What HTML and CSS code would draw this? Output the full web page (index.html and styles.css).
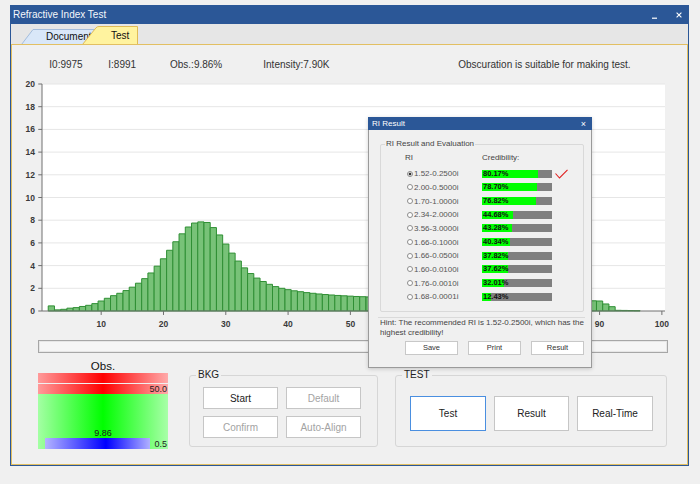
FILE: index.html
```html
<!DOCTYPE html>
<html>
<head>
<meta charset="utf-8">
<title>Refractive Index Test</title>
<link rel="stylesheet" href="styles.css">
</head>
<body>
<div class="window">
  <div class="titlebar">
    <span class="title">Refractive Index Test</span>
    <div class="title-ctrls">
      <svg class="ctl-min" width="5" height="5" viewBox="0 0 5 5"><rect x="0" y="3.6" width="5" height="1.2" fill="#fff"/></svg>
      <svg class="ctl-close" width="6" height="6" viewBox="0 0 6 6"><path d="M0.6 0.6L5.4 5.4M5.4 0.6L0.6 5.4" stroke="#fff" stroke-width="1.1"/></svg>
    </div>
  </div>
  <div class="tabstrip">
    <svg class="tabs" width="677" height="20" viewBox="0 0 677 20">
      <polygon points="10.5,20.5 22,5.5 90,5.5 90,20.5" fill="#d9e7f8" stroke="#a3bcdc"/>
      <text class="tab-text" x="35" y="15.5">Document</text>
      <path d="M71.5,20.5 L85,3.8 Q86.2,2.5 88,2.5 L126.5,2.5 L126.5,20.5" fill="#fff39f" stroke="#e0bb55"/>
      <text class="tab-text" x="100" y="14.7">Test</text>
    </svg>
  </div>
  <div class="content">
    <div class="info">
      <span>I0:9975</span>
      <span>I:8991</span>
      <span>Obs.:9.86%</span>
      <span>Intensity:7.90K</span>
      <span>Obscuration is suitable for making test.</span>
    </div>

    <svg class="chart" width="640" height="250" viewBox="0 0 640 250">
      <rect x="12" y="4" width="623" height="227" fill="#fff"/>
      <g transform="translate(12,231) scale(6.23,-11.35)">
        <g class="grid">
          <line x1="0" x2="100" y1="2" y2="2"/>
          <line x1="0" x2="100" y1="4" y2="4"/>
          <line x1="0" x2="100" y1="6" y2="6"/>
          <line x1="0" x2="100" y1="8" y2="8"/>
          <line x1="0" x2="100" y1="10" y2="10"/>
          <line x1="0" x2="100" y1="12" y2="12"/>
          <line x1="0" x2="100" y1="14" y2="14"/>
          <line x1="0" x2="100" y1="16" y2="16"/>
          <line x1="0" x2="100" y1="18" y2="18"/>
          <line x1="0" x2="100" y1="20" y2="20"/>
        </g>
        <g class="bars">
          <rect x="1" y="0" width="1" height="0.45"/>
          <rect x="2" y="0" width="1" height="0.1"/>
          <rect x="3" y="0" width="1" height="0.15"/>
          <rect x="4" y="0" width="1" height="0.25"/>
          <rect x="5" y="0" width="1" height="0.3"/>
          <rect x="6" y="0" width="1" height="0.4"/>
          <rect x="7" y="0" width="1" height="0.5"/>
          <rect x="8" y="0" width="1" height="0.65"/>
          <rect x="9" y="0" width="1" height="0.88"/>
          <rect x="10" y="0" width="1" height="1.12"/>
          <rect x="11" y="0" width="1" height="1.35"/>
          <rect x="12" y="0" width="1" height="1.56"/>
          <rect x="13" y="0" width="1" height="1.8"/>
          <rect x="14" y="0" width="1" height="2.1"/>
          <rect x="15" y="0" width="1" height="2.45"/>
          <rect x="16" y="0" width="1" height="2.85"/>
          <rect x="17" y="0" width="1" height="3.35"/>
          <rect x="18" y="0" width="1" height="3.95"/>
          <rect x="19" y="0" width="1" height="4.6"/>
          <rect x="20" y="0" width="1" height="5.35"/>
          <rect x="21" y="0" width="1" height="6.1"/>
          <rect x="22" y="0" width="1" height="6.8"/>
          <rect x="23" y="0" width="1" height="7.4"/>
          <rect x="24" y="0" width="1" height="7.75"/>
          <rect x="25" y="0" width="1" height="7.85"/>
          <rect x="26" y="0" width="1" height="7.8"/>
          <rect x="27" y="0" width="1" height="7.35"/>
          <rect x="28" y="0" width="1" height="6.7"/>
          <rect x="29" y="0" width="1" height="5.9"/>
          <rect x="30" y="0" width="1" height="5.1"/>
          <rect x="31" y="0" width="1" height="4.4"/>
          <rect x="32" y="0" width="1" height="3.8"/>
          <rect x="33" y="0" width="1" height="3.3"/>
          <rect x="34" y="0" width="1" height="2.9"/>
          <rect x="35" y="0" width="1" height="2.6"/>
          <rect x="36" y="0" width="1" height="2.35"/>
          <rect x="37" y="0" width="1" height="2.15"/>
          <rect x="38" y="0" width="1" height="2.0"/>
          <rect x="39" y="0" width="1" height="1.88"/>
          <rect x="40" y="0" width="1" height="1.78"/>
          <rect x="41" y="0" width="1" height="1.7"/>
          <rect x="42" y="0" width="1" height="1.62"/>
          <rect x="43" y="0" width="1" height="1.56"/>
          <rect x="44" y="0" width="1" height="1.5"/>
          <rect x="45" y="0" width="1" height="1.45"/>
          <rect x="46" y="0" width="1" height="1.41"/>
          <rect x="47" y="0" width="1" height="1.37"/>
          <rect x="48" y="0" width="1" height="1.34"/>
          <rect x="49" y="0" width="1" height="1.31"/>
          <rect x="50" y="0" width="1" height="1.28"/>
          <rect x="51" y="0" width="1" height="1.26"/>
          <rect x="52" y="0" width="1" height="1.24"/>
          <rect x="53" y="0" width="1" height="1.22"/>
          <rect x="54" y="0" width="1" height="1.2"/>
          <rect x="55" y="0" width="1" height="1.18"/>
          <rect x="56" y="0" width="1" height="1.16"/>
          <rect x="57" y="0" width="1" height="1.15"/>
          <rect x="58" y="0" width="1" height="1.14"/>
          <rect x="59" y="0" width="1" height="1.13"/>
          <rect x="60" y="0" width="1" height="1.12"/>
          <rect x="61" y="0" width="1" height="1.11"/>
          <rect x="62" y="0" width="1" height="1.1"/>
          <rect x="63" y="0" width="1" height="1.09"/>
          <rect x="64" y="0" width="1" height="1.08"/>
          <rect x="65" y="0" width="1" height="1.07"/>
          <rect x="66" y="0" width="1" height="1.06"/>
          <rect x="67" y="0" width="1" height="1.05"/>
          <rect x="68" y="0" width="1" height="1.04"/>
          <rect x="69" y="0" width="1" height="1.03"/>
          <rect x="70" y="0" width="1" height="1.02"/>
          <rect x="71" y="0" width="1" height="1.01"/>
          <rect x="72" y="0" width="1" height="1.0"/>
          <rect x="73" y="0" width="1" height="0.99"/>
          <rect x="74" y="0" width="1" height="0.98"/>
          <rect x="75" y="0" width="1" height="0.97"/>
          <rect x="76" y="0" width="1" height="0.96"/>
          <rect x="77" y="0" width="1" height="0.95"/>
          <rect x="78" y="0" width="1" height="0.94"/>
          <rect x="79" y="0" width="1" height="0.93"/>
          <rect x="80" y="0" width="1" height="0.92"/>
          <rect x="81" y="0" width="1" height="0.92"/>
          <rect x="82" y="0" width="1" height="0.91"/>
          <rect x="83" y="0" width="1" height="0.91"/>
          <rect x="84" y="0" width="1" height="0.9"/>
          <rect x="85" y="0" width="1" height="0.9"/>
          <rect x="86" y="0" width="1" height="0.9"/>
          <rect x="87" y="0" width="1" height="0.9"/>
          <rect x="88" y="0" width="1" height="0.9"/>
          <rect x="89" y="0" width="1" height="0.88"/>
          <rect x="90" y="0" width="1" height="0.62"/>
          <rect x="91" y="0" width="1" height="0.38"/>
          <rect x="92" y="0" width="1" height="0.06"/>
          <rect x="93" y="0" width="1" height="0.05"/>
          <rect x="94" y="0" width="1" height="0.04"/>
          <rect x="95" y="0" width="1" height="0.03"/>
        </g>
        <g class="axis">
          <line x1="0" y1="0" x2="0" y2="20"/>
          <line x1="0" y1="0" x2="100" y2="0"/>
          <line x1="-0.6" x2="0" y1="0" y2="0"/>
          <line x1="-0.6" x2="0" y1="2" y2="2"/>
          <line x1="-0.6" x2="0" y1="4" y2="4"/>
          <line x1="-0.6" x2="0" y1="6" y2="6"/>
          <line x1="-0.6" x2="0" y1="8" y2="8"/>
          <line x1="-0.6" x2="0" y1="10" y2="10"/>
          <line x1="-0.6" x2="0" y1="12" y2="12"/>
          <line x1="-0.6" x2="0" y1="14" y2="14"/>
          <line x1="-0.6" x2="0" y1="16" y2="16"/>
          <line x1="-0.6" x2="0" y1="18" y2="18"/>
          <line x1="-0.6" x2="0" y1="20" y2="20"/>
          <line x1="9.5" x2="9.5" y1="0" y2="-0.35"/>
          <line x1="19.5" x2="19.5" y1="0" y2="-0.35"/>
          <line x1="29.5" x2="29.5" y1="0" y2="-0.35"/>
          <line x1="39.5" x2="39.5" y1="0" y2="-0.35"/>
          <line x1="49.5" x2="49.5" y1="0" y2="-0.35"/>
          <line x1="59.5" x2="59.5" y1="0" y2="-0.35"/>
          <line x1="69.5" x2="69.5" y1="0" y2="-0.35"/>
          <line x1="79.5" x2="79.5" y1="0" y2="-0.35"/>
          <line x1="89.5" x2="89.5" y1="0" y2="-0.35"/>
          <line x1="99.5" x2="99.5" y1="0" y2="-0.35"/>
        </g>
      </g>
      <g class="ylab">
        <text x="5" y="234">0</text>
        <text x="5" y="211.3">2</text>
        <text x="5" y="188.6">4</text>
        <text x="5" y="165.9">6</text>
        <text x="5" y="143.2">8</text>
        <text x="5" y="120.5">10</text>
        <text x="5" y="97.8">12</text>
        <text x="5" y="75.1">14</text>
        <text x="5" y="52.4">16</text>
        <text x="5" y="29.7">18</text>
        <text x="5" y="7">20</text>
      </g>
      <g class="xlab">
        <text x="71.2" y="247">10</text>
        <text x="133.5" y="247">20</text>
        <text x="195.8" y="247">30</text>
        <text x="258.1" y="247">40</text>
        <text x="320.4" y="247">50</text>
        <text x="569.6" y="247">90</text>
        <text x="631.9" y="247">100</text>
      </g>
    </svg>

    <div class="progress"></div>

    <div class="bottom">
      <div class="obs">
        <div class="obs-title">Obs.</div>
        <div class="obs-box">
          <div class="red"></div>
          <div class="red red2"><span>50.0</span></div>
          <div class="green">
            <div class="obs-val">9.86</div>
            <div class="obs-row"><div class="blue"></div><span class="min">0.5</span></div>
          </div>
        </div>
      </div>

      <div class="group bkg">
        <div class="group-label">BKG</div>
        <div class="bkg-grid">
          <button class="btn">Start</button>
          <button class="btn dis">Default</button>
          <button class="btn dis">Confirm</button>
          <button class="btn dis">Auto-Align</button>
        </div>
      </div>

      <div class="group test">
        <div class="group-label">TEST</div>
        <div class="test-row">
          <button class="btn big focus">Test</button>
          <button class="btn big mid">Result</button>
          <button class="btn big">Real-Time</button>
        </div>
      </div>
    </div>
  </div>

  <div class="dialog">
    <div class="dlg-title"><span>RI Result</span><span class="dlg-x">×</span></div>
    <div class="dgroup">
      <div class="dgroup-label">RI Result and Evaluation</div>
      <div class="ri-head"><span class="h-ri">RI</span><span>Credibility:</span></div>
      <div class="ri-rows">
        <div class="ri-row"><span class="radio on"></span><span class="ri-val">1.52-0.2500i</span><div class="cbar" style="--p:80.17%"><span>80.17%</span></div>
          <svg class="check" width="13" height="10" viewBox="0 0 13 10"><polyline points="0.5,4.5 4.5,9 12.5,0.8" fill="none" stroke="#e02020" stroke-width="1.1"/></svg></div>
        <div class="ri-row"><span class="radio"></span><span class="ri-val">2.00-0.5000i</span><div class="cbar" style="--p:78.70%"><span>78.70%</span></div></div>
        <div class="ri-row"><span class="radio"></span><span class="ri-val">1.70-1.0000i</span><div class="cbar" style="--p:76.82%"><span>76.82%</span></div></div>
        <div class="ri-row"><span class="radio"></span><span class="ri-val">2.34-2.0000i</span><div class="cbar" style="--p:44.68%"><span>44.68%</span></div></div>
        <div class="ri-row"><span class="radio"></span><span class="ri-val">3.56-3.0000i</span><div class="cbar" style="--p:43.28%"><span>43.28%</span></div></div>
        <div class="ri-row"><span class="radio"></span><span class="ri-val">1.66-0.1000i</span><div class="cbar" style="--p:40.34%"><span>40.34%</span></div></div>
        <div class="ri-row"><span class="radio"></span><span class="ri-val">1.66-0.0500i</span><div class="cbar" style="--p:37.82%"><span>37.82%</span></div></div>
        <div class="ri-row"><span class="radio"></span><span class="ri-val">1.60-0.0100i</span><div class="cbar" style="--p:37.62%"><span>37.62%</span></div></div>
        <div class="ri-row"><span class="radio"></span><span class="ri-val">1.76-0.0010i</span><div class="cbar" style="--p:32.01%"><span>32.01%</span></div></div>
        <div class="ri-row"><span class="radio"></span><span class="ri-val">1.68-0.0001i</span><div class="cbar" style="--p:12.43%"><span>12.43%</span></div></div>
      </div>
    </div>
    <div class="hint">Hint: The recommended RI is 1.52-0.2500i, which has the highest credibility!</div>
    <div class="dlg-btns">
      <button class="dbtn">Save</button>
      <button class="dbtn">Print</button>
      <button class="dbtn">Result</button>
    </div>
  </div>
</div>
</body>
</html>
```

FILE: styles.css
```css
* { box-sizing: border-box; }
html, body { margin: 0; padding: 0; }
body {
  width: 700px;
  height: 484px;
  overflow: hidden;
  background: #f0f0f0;
  font-family: "Liberation Sans", Arial, sans-serif;
  font-size: 10px;
  color: #333;
}

.window {
  position: relative;
  margin: 5px 0 0 10px;
  width: 679px;
  height: 461px;
  border: 1px solid #2b5797;
  border-top: 0;
  background: #f0f0f0;
  display: flex;
  flex-direction: column;
}

.titlebar {
  height: 19px;
  flex: none;
  margin: 0 -1px;
  background: #2b5797;
  color: #fff;
  display: flex;
  align-items: center;
  justify-content: space-between;
  padding: 0 7px 0 3px;
}
.title { font-size: 10px; color: #f4f7fb; }
.title-ctrls { display: flex; align-items: center; gap: 19px; }
.ctl-min { display: block; margin-top: 4px; }
.ctl-close { display: block; }

.tabstrip {
  height: 20px;
  flex: none;
  background: #e6e6e6;
}
.tabs { display: block; }
.tab-text { font-family: "Liberation Sans", Arial, sans-serif; font-size: 10px; fill: #111; }

.content {
  flex: 1;
  border: 1px solid #e2bf62;
  padding: 0 19px 0 26px;
  display: flex;
  flex-direction: column;
}

.info {
  height: 35px;
  padding: 3px 0 0 11.3px;
  display: grid;
  grid-template-columns: 59px 61.7px 93.3px 195px auto;
  align-items: center;
  font-size: 10px;
  color: #333;
  white-space: nowrap;
}

.chart {
  display: block;
  margin-left: -8px;
  flex: none;
  overflow: visible;
}
.grid line { stroke: #e6e6e6; stroke-width: 1; vector-effect: non-scaling-stroke; }
.bars rect { fill: #78c278; stroke: #2f8f34; stroke-width: 1; vector-effect: non-scaling-stroke; }
.axis line { stroke: #707070; stroke-width: 1; vector-effect: non-scaling-stroke; }
.ylab text, .xlab text {
  font-family: "Liberation Sans", Arial, sans-serif;
  font-size: 8.5px;
  font-weight: bold;
  fill: #3a3a3a;
}
.ylab { text-anchor: end; }
.xlab { text-anchor: middle; }

.progress {
  flex: none;
  margin-top: 10px;
  height: 13px;
  border: 1px solid #a6a6a6;
  background: #f5f5f5;
  box-shadow: inset 0 0 0 1px #e6e6e6;
}

.bottom {
  display: flex;
  align-items: flex-start;
  margin-top: 7px;
}

.obs { width: 130px; flex: none; }
.obs-title {
  height: 13px;
  line-height: 13px;
  text-align: center;
  font-size: 11.5px;
  color: #111;
}
.obs-box {
  height: 76px;
  display: flex;
  flex-direction: column;
}
.red {
  height: 10px;
  flex: none;
  background: linear-gradient(to right, #ff9a9a, #ff0000 50%, #ffaaaa);
}
.red2 {
  margin-top: 1px;
  display: flex;
  justify-content: flex-end;
  align-items: center;
  font-size: 9px;
  line-height: 10px;
  color: #222;
  padding-right: 1px;
}
.green {
  flex: 1;
  background: linear-gradient(to right, #a4ffa4, #00ff00 50%, #a8ffa8);
  display: flex;
  flex-direction: column;
  justify-content: flex-end;
}
.obs-val {
  text-align: center;
  font-size: 9px;
  line-height: 10px;
  color: #1a1a1a;
}
.obs-row {
  height: 11px;
  display: flex;
  align-items: center;
}
.blue {
  margin-left: 7px;
  width: 105px;
  height: 11px;
  background: linear-gradient(to right, #b4b4ff, #0000ff 58%, #b0b0ff);
}
.min {
  margin-left: auto;
  padding-right: 1px;
  font-size: 9px;
  color: #222;
}

.group {
  flex: none;
  margin-top: 15px;
  height: 72px;
  border: 1px solid #d6d6d6;
  border-radius: 3px;
}
.bkg { margin-left: 21px; width: 189px; }
.test { margin-left: 17px; width: 272px; }
.group-label {
  width: max-content;
  margin: -7px 0 0 6px;
  padding: 0 2px;
  line-height: 12px;
  background: #f0f0f0;
  font-size: 10px;
  color: #222;
}

.btn {
  font-family: "Liberation Sans", Arial, sans-serif;
  font-size: 10px;
  color: #222;
  background: #fff;
  border: 1px solid #c6c6c6;
  padding: 0;
  margin: 0;
}
.btn.dis { color: #a3a3a3; }
.btn.focus { border-color: #4a8fe0; }

.bkg-grid {
  display: grid;
  grid-template-columns: 75px 75px;
  grid-auto-rows: 22px;
  column-gap: 8px;
  row-gap: 7px;
  margin: 6px 0 0 13px;
}
.test-row {
  display: flex;
  gap: 8px;
  margin: 15px 0 0 14px;
}
.btn.big { width: 76px; height: 35px; }
.btn.big.mid { width: 75px; }

/* dialog */
.dialog {
  position: absolute;
  left: 357px;
  top: 112px;
  width: 224px;
  height: 251px;
  background: #f0f0f0;
  border: 1px solid #9a9a9a;
  border-top: 0;
  box-shadow: 0 1px 4px rgba(0, 0, 0, 0.18);
  display: flex;
  flex-direction: column;
}
.dlg-title {
  height: 13px;
  flex: none;
  margin: 0 -1px;
  background: #2b5797;
  color: #fff;
  font-size: 8px;
  display: flex;
  align-items: center;
  justify-content: space-between;
  padding: 0 6px 0 4px;
}
.dlg-x { font-size: 9px; }

.dgroup {
  margin: 14px 0 0 11px;
  width: 204px;
  border: 1px solid #d9d9d9;
  border-radius: 2px;
  padding-bottom: 7px;
}
.dgroup-label {
  width: max-content;
  margin: -6px 0 0 4px;
  padding: 0 1px;
  line-height: 10px;
  background: #f0f0f0;
  font-size: 8px;
  color: #444;
}
.ri-head {
  display: flex;
  margin-top: 4px;
  height: 10px;
  line-height: 10px;
  padding-left: 24px;
  font-size: 8px;
  color: #444;
}
.h-ri { width: 77px; }
.ri-rows { margin-top: 4px; }
.ri-row {
  height: 13.67px;
  display: flex;
  align-items: center;
  padding-left: 26px;
  font-size: 8px;
  color: #555;
}
.radio {
  width: 6px;
  height: 6px;
  flex: none;
  border-radius: 50%;
  border: 1px solid #8c8c8c;
  background: #fff;
}
.radio.on { background: radial-gradient(circle, #333 0 1.2px, #fff 1.7px); }
.ri-val {
  width: 68px;
  margin-left: 1px;
  overflow: hidden;
  white-space: nowrap;
}
.cbar {
  width: 70px;
  height: 8px;
  flex: none;
  display: flex;
  align-items: center;
  background: linear-gradient(to right, #00ff00 var(--p), #808080 var(--p));
}
.cbar span {
  padding-left: 1px;
  font-weight: bold;
  font-size: 7.5px;
  line-height: 8px;
  color: #111;
}
.check { display: block; margin-left: 3px; }

.hint {
  margin: 5px 6px 0 9px;
  border-top: 1px solid #dadada;
  padding-left: 2px;
  font-size: 8px;
  line-height: 10px;
  color: #444;
}
.dlg-btns {
  display: flex;
  justify-content: flex-end;
  gap: 10px;
  margin: 3px 7px 0 0;
}
.dbtn {
  width: 53px;
  height: 14px;
  padding: 0;
  font-family: "Liberation Sans", Arial, sans-serif;
  font-size: 7.5px;
  color: #333;
  background: #fff;
  border: 1px solid #c8c8c8;
}
```
